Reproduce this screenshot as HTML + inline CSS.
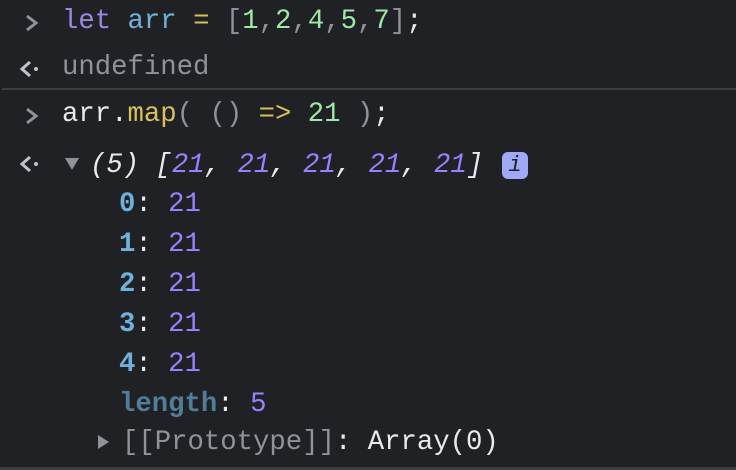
<!DOCTYPE html><html><head><style>
body{margin:0;width:736px;height:470px;background:#202124;overflow:hidden;font-family:"Liberation Mono","DejaVu Sans Mono",monospace;font-size:27.3px;color:#e8eaed;position:relative}
.r{position:absolute;white-space:pre;line-height:32px}
.g{color:#8f9398}
.kw{color:#9c87e0}.v{color:#6fb0dd}.y{color:#d9c05b}.n{color:#9ee8a8}.p{color:#9980ff}.k{color:#6fb0dd;font-weight:bold}.kd{color:#507d99}
svg{position:absolute}
</style></head><body>
<svg style="left:22px;top:12px" width="20" height="22"><path d="M5 4 L14 11 L5 18" fill="none" stroke="#8f9398" stroke-width="3"/></svg>
<div class="r" style="left:62px;top:6px"><span class="kw">let</span> <span class="v">arr</span> <span class="y">=</span> <span class="g">[</span><span class="n">1</span><span class="g">,</span><span class="n">2</span><span class="g">,</span><span class="n">4</span><span class="g">,</span><span class="n">5</span><span class="g">,</span><span class="n">7</span><span class="g">]</span>;</div>
<svg style="left:18px;top:58px" width="24" height="22"><path d="M12 4 L4 11 L12 18" fill="none" stroke="#c0c3c7" stroke-width="3"/><circle cx="18" cy="11" r="2" fill="#c0c3c7"/></svg>
<div class="r g" style="left:62px;top:52px">undefined</div>
<div style="position:absolute;left:2px;right:0;top:88px;height:2px;background:#3c3d40"></div>
<svg style="left:22px;top:105px" width="20" height="22"><path d="M5 4 L14 11 L5 18" fill="none" stroke="#8f9398" stroke-width="3"/></svg>
<div class="r" style="left:62px;top:99px">arr.<span class="y">map</span><span class="g">( () </span><span class="y">=&gt;</span> <span class="n">21</span><span class="g"> )</span>;</div>
<svg style="left:18px;top:153px" width="24" height="22"><path d="M12 4 L4 11 L12 18" fill="none" stroke="#c0c3c7" stroke-width="3"/><circle cx="18" cy="11" r="2" fill="#c0c3c7"/></svg>
<div style="position:absolute;left:65px;top:158px;width:0;height:0;border-left:7px solid transparent;border-right:7px solid transparent;border-top:12px solid #8f9398"></div>
<div class="r" style="left:90px;top:150px;font-style:italic">(5) [<span class="p">21</span>, <span class="p">21</span>, <span class="p">21</span>, <span class="p">21</span>, <span class="p">21</span>]</div>
<div style="position:absolute;left:502px;top:152px;width:26px;height:27px;border-radius:6px;background:#a0a8f8;color:#202124;font-style:italic;font-size:22px;text-align:center;line-height:27px">i</div>
<div class="r" style="left:119px;top:189px"><span class="k">0</span>: <span class="p">21</span></div>
<div class="r" style="left:119px;top:229px"><span class="k">1</span>: <span class="p">21</span></div>
<div class="r" style="left:119px;top:269px"><span class="k">2</span>: <span class="p">21</span></div>
<div class="r" style="left:119px;top:309px"><span class="k">3</span>: <span class="p">21</span></div>
<div class="r" style="left:119px;top:349px"><span class="k">4</span>: <span class="p">21</span></div>
<div class="r" style="left:119px;top:389px"><span class="kd" style="font-weight:bold">length</span>: <span class="p">5</span></div>
<div style="position:absolute;left:98px;top:435px;width:0;height:0;border-top:7px solid transparent;border-bottom:7px solid transparent;border-left:11px solid #8f9398"></div>
<div class="r" style="left:122px;top:427px"><span class="g">[[Prototype]]</span>: Array(0)</div>
<div style="position:absolute;left:0;right:0;top:467px;height:3px;background:#3c3d40"></div>
</body></html>
